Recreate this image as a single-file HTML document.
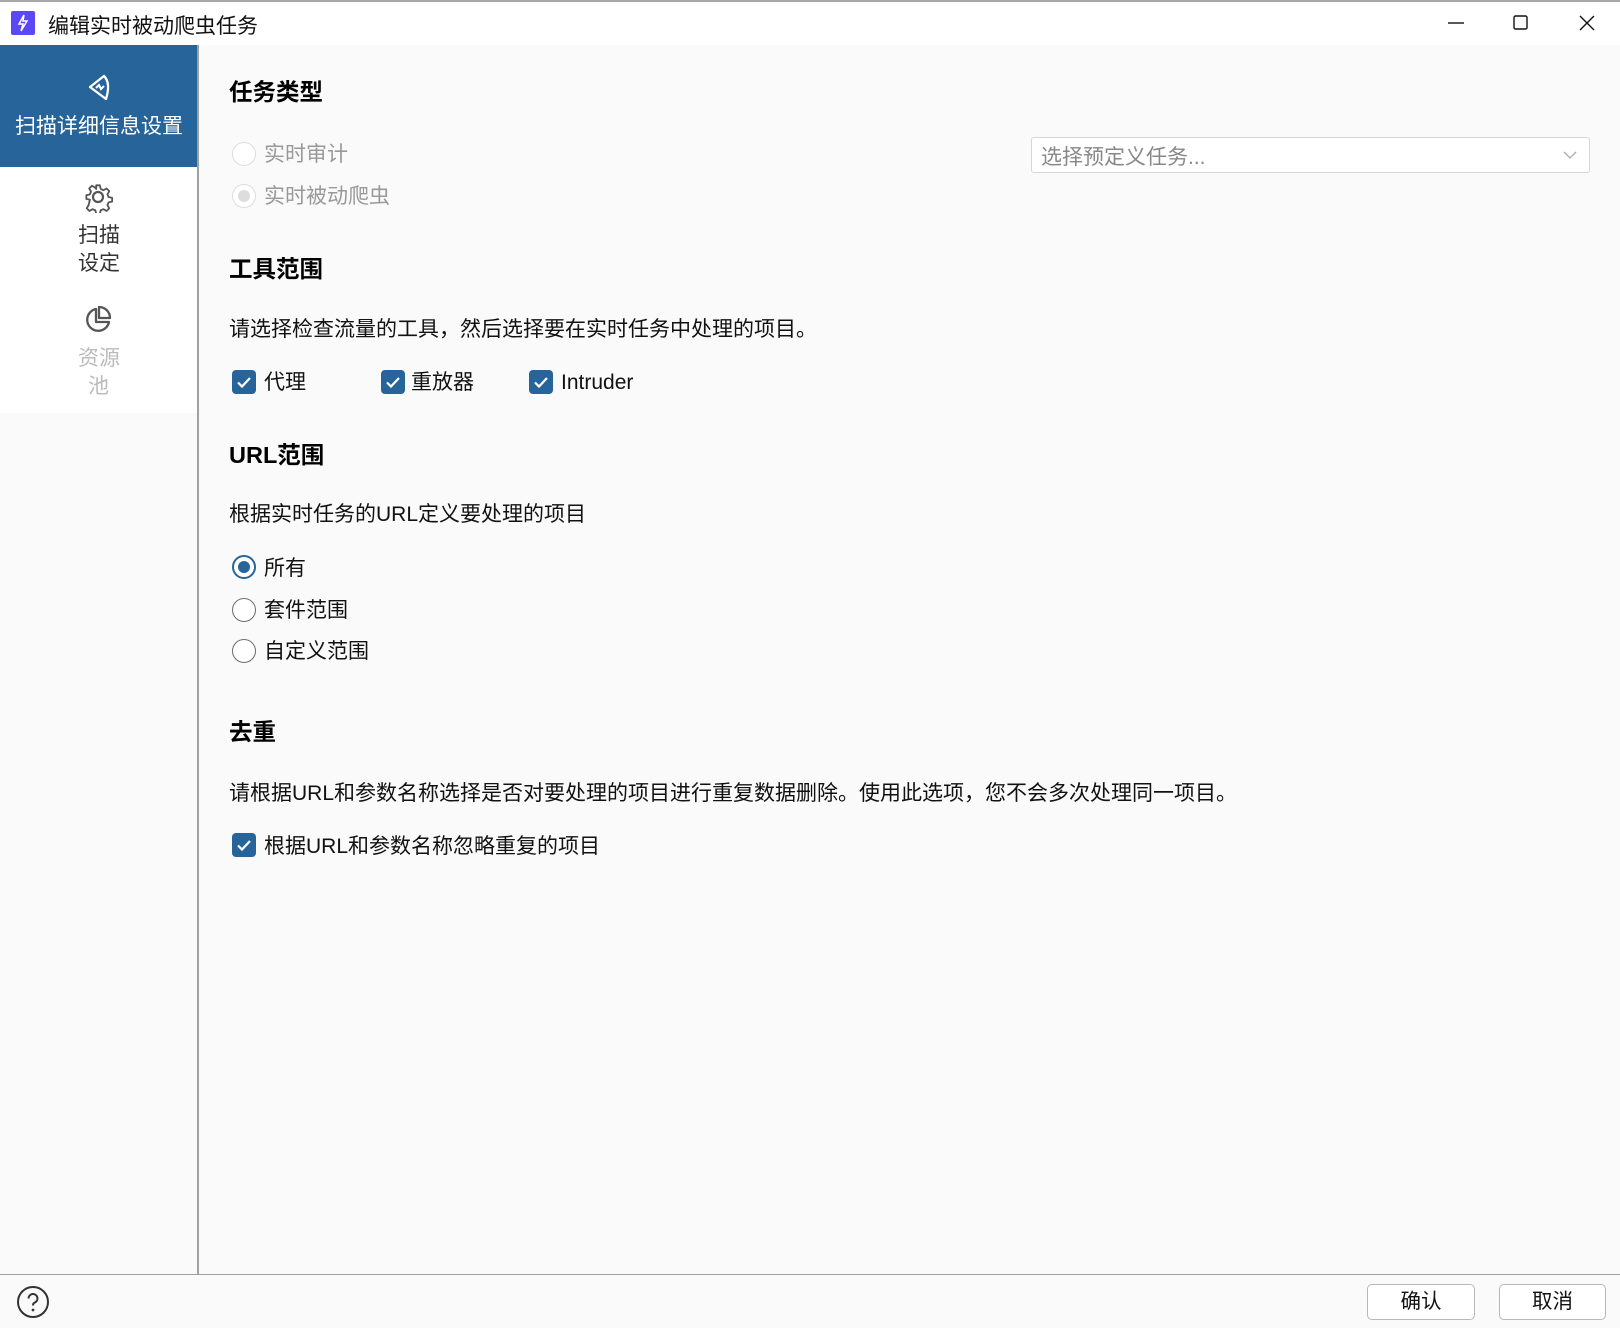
<!DOCTYPE html>
<html><head><meta charset="utf-8"><style>
*{margin:0;padding:0;box-sizing:border-box}
body{width:1620px;height:1328px;background:#fafafa;font-family:"Liberation Sans","Noto Sans CJK SC",sans-serif;color:#111;position:relative;overflow:hidden}
.abs{position:absolute;white-space:nowrap}
.title{top:0;left:0;width:1620px;height:45px;background:#fff;border-top:2px solid #a8a8a8}
.side{top:45px;left:0;width:197px;height:368px;background:#fff}
.sel{top:45px;left:0;width:197px;height:122px;background:#27649a}
.vline{top:45px;left:197px;width:2px;height:1230px;background:#a0a0a0}
.hline{top:1274px;left:0;width:1620px;height:1px;background:#a0a0a0}
.h{font-size:23.5px;font-weight:bold;color:#000}
.t{font-size:21px;line-height:24px}
.cb{width:24px;height:24px;border-radius:4px;background:#27649a}
.rb{width:24px;height:24px;border-radius:50%;border:1.5px solid #6c6c6c;background:#fff}
.btn{height:36px;border:1.5px solid #b8b8b8;border-radius:5px;background:#fff;font-size:20.5px;text-align:center;line-height:33px}
</style></head><body>
<div class="abs title"></div>
<div class="abs" style="left:11px;top:11px;width:24px;height:24px;background:#5b48f5;border-radius:2px"><svg width="24" height="24"><path d="M13 4 L8 13 L12 13 L10 20 L16 10 L12 10 Z" fill="none" stroke="#fff" stroke-width="1.5"/></svg></div>
<div class="abs" style="left:48px;top:10px;font-size:21px">编辑实时被动爬虫任务</div>
<svg class="abs" style="left:1440px;top:8px" width="170" height="30"><path d="M8 15H24" stroke="#111" stroke-width="1.4"/><rect x="74" y="8" width="13" height="13" rx="1.5" fill="none" stroke="#111" stroke-width="1.4"/><path d="M140 8L154 22M154 8L140 22" stroke="#111" stroke-width="1.4"/></svg>
<div class="abs side"></div>
<div class="abs sel"></div>
<svg class="abs" style="left:84px;top:71px" width="32" height="32"><path d="M6 16 L20 5 Q27 12 22 28 Z" fill="none" stroke="#fff" stroke-width="2.3" stroke-linejoin="round"/><path d="M12 17 L15 14 L17 18 L20 15" fill="none" stroke="#fff" stroke-width="2"/></svg>
<div class="abs" style="left:15px;top:110px;font-size:21px;color:#fff">扫描详细信息设置</div>
<svg class="abs" style="left:82px;top:181px" width="32" height="32"><circle cx="16" cy="16" r="5" fill="none" stroke="#555" stroke-width="2.2"/><path d="M14 3h4l1 4 3 1.5 3.5-2 3 3-2 3.5 1.2 3 4 1v4l-4 1-1.2 3 2 3.5-3 3-3.5-2-3 1.2-1 4h-4l-1-4-3-1.2-3.5 2-3-3 2-3.5L7 19l-4-1v-4l4-1 1.2-3-2-3.5 3-3 3.5 2L14 7z" fill="none" stroke="#555" stroke-width="2" stroke-linejoin="round" transform="scale(0.9) translate(1.8 1.8)"/></svg>
<div class="abs" style="left:78px;top:222px;font-size:21px;color:#333;line-height:28px">扫描<br>设定</div>
<svg class="abs" style="left:82px;top:304px" width="32" height="32"><path d="M14 5 A11 11 0 1 0 27 18 L14 18 Z" fill="none" stroke="#555" stroke-width="2.3" stroke-linejoin="round"/><path d="M17 3 A11 11 0 0 1 28 14 L17 14 Z" fill="none" stroke="#555" stroke-width="2.3" stroke-linejoin="round"/></svg>
<div class="abs" style="left:78px;top:345px;font-size:21px;color:#bbb;line-height:28px">资源<br><span style="padding-left:10px">池</span></div>
<div class="abs vline"></div>

<div class="abs h" style="left:229px;top:73px">任务类型</div>
<div class="abs rb" style="left:232px;top:142px;border-color:#ddd"></div>
<div class="abs t" style="left:264px;top:143px;color:#999">实时审计</div>
<div class="abs rb" style="left:232px;top:184px;border-color:#ddd"><div style="margin:4.5px;width:12px;height:12px;border-radius:50%;background:#ddd"></div></div>
<div class="abs t" style="left:264px;top:185px;color:#999">实时被动爬虫</div>
<div class="abs" style="left:1031px;top:137px;width:559px;height:36px;background:#fff;border:1.5px solid #d6d6d6;border-radius:3px"></div>
<div class="abs t" style="left:1041px;top:146px;color:#888">选择预定义任务...</div>
<svg class="abs" style="left:1562px;top:149px" width="16" height="12"><path d="M2 3L8 9L14 3" fill="none" stroke="#aaa" stroke-width="1.3"/></svg>

<div class="abs h" style="left:229px;top:250px">工具范围</div>
<div class="abs t" style="left:229px;top:318px">请选择检查流量的工具，然后选择要在实时任务中处理的项目。</div>
<div class="abs cb" style="left:232px;top:370px"><svg width="24" height="24"><path d="M6 12.5L10 16.5L18 8" fill="none" stroke="#fff" stroke-width="2.2"/></svg></div>
<div class="abs t" style="left:264px;top:371px">代理</div>
<div class="abs cb" style="left:381px;top:370px"><svg width="24" height="24"><path d="M6 12.5L10 16.5L18 8" fill="none" stroke="#fff" stroke-width="2.2"/></svg></div>
<div class="abs t" style="left:411px;top:371px">重放器</div>
<div class="abs cb" style="left:529px;top:370px"><svg width="24" height="24"><path d="M6 12.5L10 16.5L18 8" fill="none" stroke="#fff" stroke-width="2.2"/></svg></div>
<div class="abs t" style="left:561px;top:371px">Intruder</div>

<div class="abs h" style="left:229px;top:436px">URL范围</div>
<div class="abs t" style="left:229px;top:503px">根据实时任务的URL定义要处理的项目</div>
<div class="abs rb" style="left:232px;top:555px;border:2px solid #27649a"><div style="margin:4px;width:12px;height:12px;border-radius:50%;background:#27649a"></div></div>
<div class="abs t" style="left:264px;top:557px">所有</div>
<div class="abs rb" style="left:232px;top:598px"></div>
<div class="abs t" style="left:264px;top:599px">套件范围</div>
<div class="abs rb" style="left:232px;top:639px"></div>
<div class="abs t" style="left:264px;top:640px">自定义范围</div>

<div class="abs h" style="left:229px;top:713px">去重</div>
<div class="abs t" style="left:229px;top:782px">请根据URL和参数名称选择是否对要处理的项目进行重复数据删除。使用此选项，您不会多次处理同一项目。</div>
<div class="abs cb" style="left:232px;top:833px"><svg width="24" height="24"><path d="M6 12.5L10 16.5L18 8" fill="none" stroke="#fff" stroke-width="2.2"/></svg></div>
<div class="abs t" style="left:264px;top:835px">根据URL和参数名称忽略重复的项目</div>

<div class="abs hline"></div>
<svg class="abs" style="left:16px;top:1285px" width="36" height="36"><circle cx="17" cy="17" r="15" fill="none" stroke="#333" stroke-width="2"/><path d="M12.5 13.5a4.5 4.5 0 1 1 6 4.2c-1.2.5-1.5 1.3-1.5 2.8" fill="none" stroke="#333" stroke-width="2"/><circle cx="17" cy="25" r="1.4" fill="#333"/></svg>
<div class="abs btn" style="left:1367px;top:1284px;width:108px">确认</div>
<div class="abs btn" style="left:1499px;top:1284px;width:107px">取消</div>
</body></html>
